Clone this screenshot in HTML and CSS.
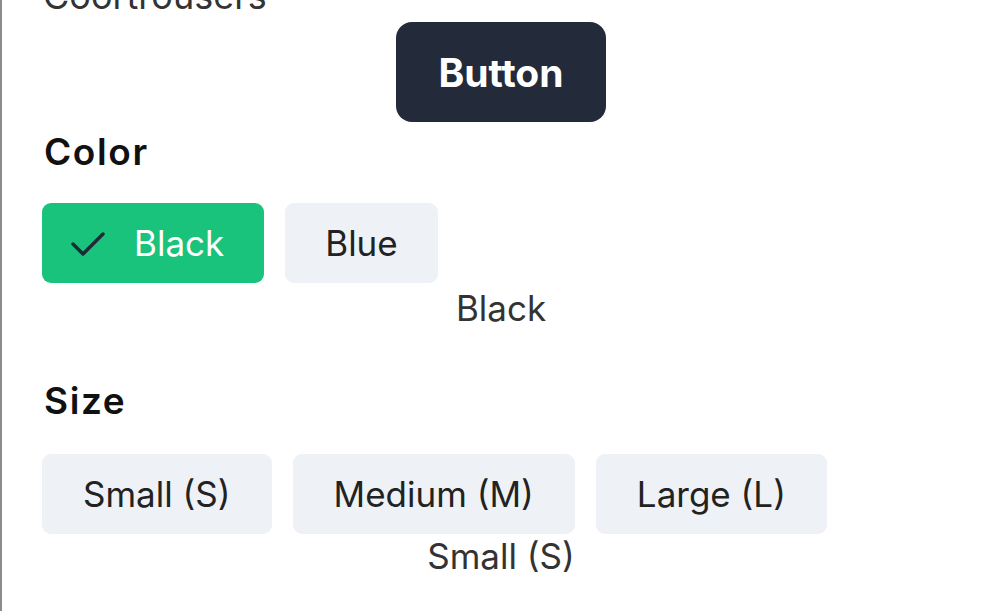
FILE: index.html
```html
<!DOCTYPE html>
<html>
<head>
<meta name="viewport" content="width=device-width, initial-scale=1">
<link rel="stylesheet" href="styles.css">
</head>
<body>

<div class="panel">

  <p class="product-name">Coortrousers</p>

  <div class="actions">
    <button class="main-btn">Button</button>
  </div>

  <h3 class="option-title color-title">Color</h3>
  <div class="chips">
    <button class="chip selected">
      <svg class="check" viewBox="0 0 24 24" width="48" height="48">
        <path d="M4.5 12.5l5 5L19.5 7.5" fill="none" stroke="#1f2937" stroke-width="1.7" stroke-linecap="round" stroke-linejoin="round"/>
      </svg>
      Black
    </button>
    <button class="chip">Blue</button>
  </div>
  <p class="picked">Black</p>

  <h3 class="option-title size-title">Size</h3>
  <div class="chips">
    <button class="chip size">Small (S)</button>
    <button class="chip size">Medium (M)</button>
    <button class="chip size">Large (L)</button>
  </div>
  <p class="picked last">Small (S)</p>

</div>

</body>
</html>
```

FILE: styles.css
```css
html, body {
    margin: 0;
    height: 100%;
    background: #fff;
    overflow: hidden;
}

body {
    border-left: 2px solid #8c8c8c;
    font-family: Inter, "Noto Sans", sans-serif;
    color: #111;
}

.panel {
    padding: 0 40px;
}

.product-name {
    margin: -24px 0 0 1px;
    font-size: 36px;
    line-height: 40px;
    color: #333;
}

.actions {
    display: flex;
    justify-content: center;
    margin-top: 6px;
}

.main-btn {
    width: 210px;
    height: 100px;
    border: none;
    border-radius: 16px;
    background: #232a3a;
    color: #fff;
    font-family: inherit;
    font-size: 39px;
    font-weight: 700;
}

.option-title {
    margin: 10px 0 0 2px;
    font-size: 37px;
    line-height: 40px;
    font-weight: 600;
    letter-spacing: 1.6px;
    color: #111;
}

.size-title {
    margin-top: 53px;
}

.chips {
    display: flex;
    gap: 21px;
    margin-top: 31px;
}

.size-title + .chips {
    margin-top: 33px;
}

.chip {
    display: flex;
    align-items: center;
    height: 80px;
    padding: 0 40px;
    border: none;
    border-radius: 9px;
    background: #eef1f6;
    color: #222;
    font-family: inherit;
    font-size: 35px;
}

.chip.selected {
    padding: 0 40px 0 22px;
    gap: 22px;
    background: #19c37b;
    color: #fff;
}

.chip.size {
    padding: 0 41px;
}

.picked {
    margin: 5px 0 0;
    text-align: center;
    font-size: 35px;
    line-height: 40px;
    color: #333;
}

.picked.last {
    margin-top: 2px;
}
```
